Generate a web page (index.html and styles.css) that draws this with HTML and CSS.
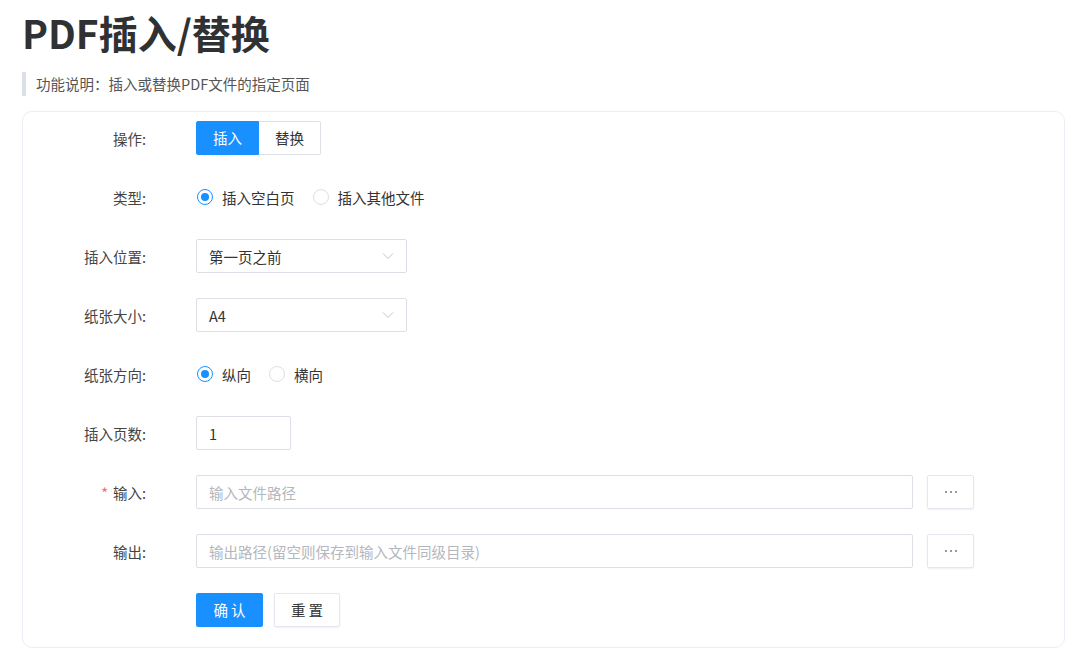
FILE: index.html
```html
<!DOCTYPE html>
<html lang="zh-CN">
<head>
<meta charset="utf-8">
<title>PDF插入/替换</title>
<link rel="stylesheet" href="styles.css">
</head>
<body>
<h1 class="title">PDF插入/替换</h1>
<div class="desc">功能说明：插入或替换PDF文件的指定页面</div>
<div class="card">
  <div class="row">
    <div class="label">操作:</div>
    <div class="ctrl">
      <div class="seg">
        <span class="seg-btn active">插入</span>
        <span class="seg-btn">替换</span>
      </div>
    </div>
  </div>
  <div class="row">
    <div class="label">类型:</div>
    <div class="ctrl radios">
      <label class="radio checked"><span class="dot"></span><span>插入空白页</span></label>
      <label class="radio"><span class="dot"></span><span>插入其他文件</span></label>
    </div>
  </div>
  <div class="row">
    <div class="label">插入位置:</div>
    <div class="ctrl">
      <div class="select"><span>第一页之前</span>
        <svg class="chev" width="12" height="8" viewBox="0 0 12 8"><path d="M1 1.5 L6 6.5 L11 1.5" fill="none" stroke="#c0c4cc" stroke-width="1"/></svg>
      </div>
    </div>
  </div>
  <div class="row">
    <div class="label">纸张大小:</div>
    <div class="ctrl">
      <div class="select"><span>A4</span>
        <svg class="chev" width="12" height="8" viewBox="0 0 12 8"><path d="M1 1.5 L6 6.5 L11 1.5" fill="none" stroke="#c0c4cc" stroke-width="1"/></svg>
      </div>
    </div>
  </div>
  <div class="row">
    <div class="label">纸张方向:</div>
    <div class="ctrl radios">
      <label class="radio checked"><span class="dot"></span><span>纵向</span></label>
      <label class="radio"><span class="dot"></span><span>横向</span></label>
    </div>
  </div>
  <div class="row">
    <div class="label">插入页数:</div>
    <div class="ctrl">
      <div class="input small">1</div>
    </div>
  </div>
  <div class="row">
    <div class="label"><span class="req">*</span>输入:</div>
    <div class="ctrl">
      <div class="input wide placeholder">输入文件路径</div>
      <div class="more"><i></i><i></i><i></i></div>
    </div>
  </div>
  <div class="row">
    <div class="label">输出:</div>
    <div class="ctrl">
      <div class="input wide placeholder">输出路径(留空则保存到输入文件同级目录)</div>
      <div class="more"><i></i><i></i><i></i></div>
    </div>
  </div>
  <div class="row">
    <div class="label"></div>
    <div class="ctrl">
      <div class="btn primary">确 认</div>
      <div class="btn plain">重 置</div>
    </div>
  </div>
</div>
</body>
</html>
```
FILE: styles.css
```css
* { box-sizing: border-box; }
html, body { margin: 0; padding: 0; background: #fff; }
body {
  padding: 0 15px 0 22px;
  font-family: "Noto Sans CJK SC", "Noto Sans", sans-serif;
  font-size: 14.5px;
  color: #333;
}
.title {
  margin: 9px 0 0 0;
  font-size: 39px;
  line-height: 46px;
  font-weight: 700;
  color: #303133;
}
.desc {
  margin-top: 17px;
  height: 24px;
  line-height: 24px;
  border-left: 4px solid #dcdfe6;
  padding-left: 10px;
  color: #555;
  font-size: 14.5px;
}
.card {
  margin-top: 15px;
  border: 1px solid #ebeef5;
  border-radius: 10px;
  padding: 9px 0 20px 0;
  display: flex;
  flex-direction: column;
  gap: 25px;
}
.row {
  display: flex;
  align-items: center;
  height: 34px;
}
.label {
  width: 123px;
  text-align: right;
  color: #444;
  flex: none;
}
.req { color: #f56c6c; margin-right: 5px; }
.ctrl {
  margin-left: 50px;
  display: flex;
  align-items: center;
  height: 34px;
}
.seg { display: flex; }
.seg-btn {
  width: 63px;
  height: 34px;
  line-height: 32px;
  text-align: center;
  border: 1px solid #dcdfe6;
  color: #333;
}
.seg-btn:first-child { border-radius: 2px 0 0 2px; }
.seg-btn:last-child { border-left: none; border-radius: 0 2px 2px 0; width: 62px; }
.seg-btn.active { background: #1890ff; border-color: #1890ff; color: #fff; }
.radio {
  display: flex;
  align-items: center;
  margin-left: 1px;
  margin-right: 17px;
  color: #333;
}
.radio .dot {
  width: 16px;
  height: 16px;
  border: 1px solid #dcdfe6;
  border-radius: 50%;
  margin-right: 9px;
  position: relative;
  flex: none;
}
.radio.checked .dot { border-color: #1890ff; }
.radio.checked .dot::after {
  content: "";
  position: absolute;
  left: 3px; top: 3px;
  width: 8px; height: 8px;
  border-radius: 50%;
  background: #1890ff;
}
.select {
  width: 211px;
  height: 34px;
  border: 1px solid #dcdfe6;
  border-radius: 2px;
  display: flex;
  align-items: center;
  justify-content: space-between;
  padding: 0 12px 0 12px;
  color: #333;
}
.input {
  height: 34px;
  border: 1px solid #dcdfe6;
  border-radius: 2px;
  display: flex;
  align-items: center;
  padding: 0 12px;
  color: #333;
}
.input.small { width: 95px; }
.input.wide { width: 717px; }
.input.placeholder { color: #b4b7bd; }
.more {
  margin-left: 14px;
  width: 47px;
  height: 34px;
  border: 1px solid #e4e7ed;
  border-radius: 2px;
  box-shadow: 0 1px 2px rgba(0,0,0,0.06);
  display: flex;
  align-items: center;
  justify-content: center;
  gap: 3px;
}
.more i {
  display: block;
  width: 2px;
  height: 2px;
  border-radius: 50%;
  background: #777;
}
.btn {
  height: 34px;
  line-height: 34px;
  border-radius: 2px;
  text-align: center;
  font-size: 14.5px;
}
.btn.primary { width: 67px; background: #1890ff; color: #fff; }
.btn.plain {
  width: 66px;
  margin-left: 11px;
  border: 1px solid #e4e7ed;
  line-height: 32px;
  box-shadow: 0 1px 2px rgba(0,0,0,0.06);
  color: #333;
}
```
